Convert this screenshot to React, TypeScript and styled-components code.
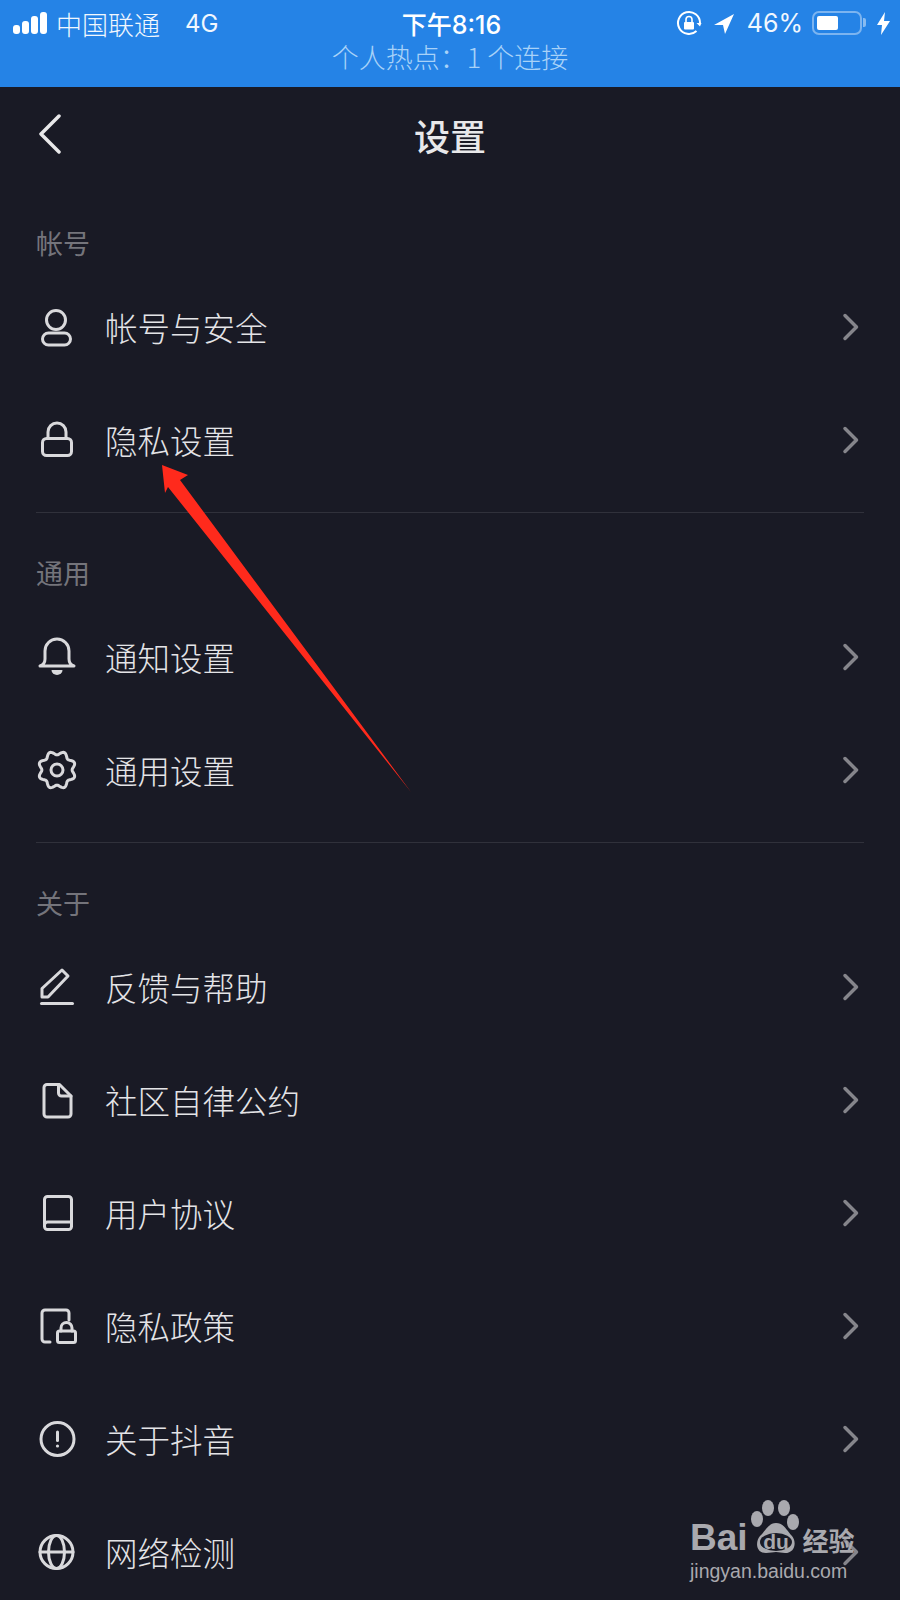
import React from "react";
import styled, { createGlobalStyle } from "styled-components";

const GlobalStyle = createGlobalStyle`
  html, body {
    margin: 0;
    padding: 0;
    background: #191a25;
  }
  * {
    box-sizing: border-box;
  }
`;

const CJK = `"Noto Sans CJK SC", "Noto Sans", sans-serif`;
const LATIN = `Inter, "Noto Sans CJK SC", sans-serif`;

// 8 lobe outline of the settings gear
function gearPath() {
  const pts: string[] = [];
  for (let i = 0; i < 96; i++) {
    const a = (i / 96) * Math.PI * 2 + Math.PI / 8;
    const r = 17 + 1.9 * Math.cos(8 * (a - Math.PI / 8));
    pts.push(`${(21 + r * Math.cos(a)).toFixed(2)} ${(21 + r * Math.sin(a)).toFixed(2)}`);
  }
  return `M${pts.join("L")}Z`;
}

const icons: Record<string, React.ReactNode> = {
  user: (
    <>
      <circle cx="20" cy="14" r="9.5" />
      <rect x="6.5" y="27" width="28" height="12" rx="6" />
    </>
  ),
  lock: (
    <>
      <rect x="6.5" y="19.5" width="29" height="17" rx="4" />
      <path d="M12 19v-6a9 9 0 0 1 18 0v6" />
    </>
  ),
  bell: (
    <>
      <path d="M4 30c3-1 5-3 5-7v-8a12 12 0 0 1 24 0v8c0 4 2 6 5 7z" />
      <path d="M15.5 34h11a5.5 5 0 0 1-11 0z" fill="#d9d9dc" stroke="none" />
    </>
  ),
  gear: (
    <>
      <path d={gearPath()} />
      <circle cx="21" cy="21" r="6" />
    </>
  ),
  pen: (
    <>
      <path d="M26 4l6 6-20 21H6v-8.5z" />
      <path d="M5.5 37.5h31" />
    </>
  ),
  doc: (
    <>
      <path d="M11 5.5h12.5L35 17v18a3 3 0 0 1-3 3H11a3 3 0 0 1-3-3V8.500a3 3 0 0 1 3-3z" />
      <path d="M22.500 5.500v8.500a3 3 0 0 0 3 3h9.500" />
    </>
  ),
  book: (
    <>
      <rect x="8.500" y="4.500" width="27" height="33" rx="3" />
      <path d="M8.500 33a3 3 0 0 1 3-3h24" />
    </>
  ),
  policy: (
    <>
      <path d="M14 37H9a3 3 0 0 1-3-3V8a3 3 0 0 1 3-3h21a3 3 0 0 1 3 3v7" />
      <rect x="21.500" y="26" width="18" height="11.500" rx="2" />
      <path d="M25 26v-3a5.500 5.500 0 0 1 11 0v3" />
    </>
  ),
  alert: (
    <>
      <circle cx="21.500" cy="21" r="16.500" />
      <path d="M21.500 14v8.500" />
      <circle cx="21.500" cy="28" r="1.600" fill="#d9d9dc" stroke="none" />
    </>
  ),
  globe: (
    <>
      <circle cx="20.500" cy="21" r="16.500" />
      <ellipse cx="20.500" cy="21" rx="8" ry="16.500" />
      <path d="M4 21h33" />
    </>
  ),
};

const sections = [
  {
    title: "帐号",
    rows: [
      { icon: "user", label: "帐号与安全" },
      { icon: "lock", label: "隐私设置" },
    ],
  },
  {
    title: "通用",
    rows: [
      { icon: "bell", label: "通知设置" },
      { icon: "gear", label: "通用设置" },
    ],
  },
  {
    title: "关于",
    rows: [
      { icon: "pen", label: "反馈与帮助" },
      { icon: "doc", label: "社区自律公约" },
      { icon: "book", label: "用户协议" },
      { icon: "policy", label: "隐私政策" },
      { icon: "alert", label: "关于抖音" },
      { icon: "globe", label: "网络检测" },
    ],
  },
];

export default function App() {
  return (
    <>
      <GlobalStyle />
      <Page>
        <StatusBar>
          <StatusRow>
            <StatusLeft>
              <svg width="35" height="22" viewBox="0 0 35 22" fill="#fff">
                <rect x="0" y="13" width="7" height="9" rx="3" />
                <rect x="9" y="9" width="7" height="13" rx="3" />
                <rect x="18" y="4" width="7" height="18" rx="3" />
                <rect x="27" y="0" width="7" height="22" rx="3" />
              </svg>
              <Carrier>中国联通</Carrier>
              <Network>4G</Network>
            </StatusLeft>
            <Clock>下午8:16</Clock>
            <StatusRight>
              <svg width="26" height="26" viewBox="0 0 26 26" fill="none" stroke="#fff" strokeWidth="2">
                <path d="M24 13a11 11 0 1 0-3.500 8" />
                <path d="M20.500 13l3.500 3.500 1.500-3.500z" fill="#fff" stroke="none" />
                <rect x="8" y="12" width="10" height="7.500" rx="1" fill="#fff" stroke="none" />
                <path d="M10 12V9.500a3 3 0 0 1 6 0V12" strokeWidth="1.600" />
              </svg>
              <svg width="21" height="21" viewBox="0 0 21 21" fill="#fff">
                <path d="M0 12L20 1 11 21 9 12z" />
              </svg>
              <Percent>46%</Percent>
              <Battery>
                <BatteryFill />
              </Battery>
              <svg width="13" height="23" viewBox="0 0 13 23" fill="#fff">
                <path d="M8 0L0 13h5l-1 10 9-14H7z" />
              </svg>
            </StatusRight>
          </StatusRow>
          <Hotspot>个人热点：1 个连接</Hotspot>
        </StatusBar>

        <NavBar>
          <BackButton>
            <svg width="24" height="40" viewBox="0 0 24 40" fill="none" stroke="#e8e8ea" strokeWidth="3.500" strokeLinecap="round" strokeLinejoin="round">
              <path d="M21 2L3 20l18 18" />
            </svg>
          </BackButton>
          <Title>设置</Title>
        </NavBar>

        {sections.map((section, index) => (
          <Section key={section.title} $last={index === sections.length - 1}>
            <SectionTitle>{section.title}</SectionTitle>
            {section.rows.map((row) => (
              <Row key={row.label}>
                <RowIcon viewBox="0 0 42 42">{icons[row.icon]}</RowIcon>
                <RowLabel>{row.label}</RowLabel>
                <Chevron viewBox="0 0 18 28">
                  <path d="M3 2.500l11.500 11.500L3 25.500" />
                </Chevron>
              </Row>
            ))}
          </Section>
        ))}

        <Arrow width="900" height="1600" viewBox="0 0 900 1600">
          <path d="M162 465L188 475 180 480 411 792 168 487 165 493z" fill="#ff2a1c" />
        </Arrow>

        <Watermark>
          <WatermarkTop>
            <BaiText>Bai</BaiText>
            <svg width="54" height="62" viewBox="0 0 54 62">
              <g fill="#a9a9ae">
                <ellipse cx="19" cy="11" rx="6" ry="8" />
                <ellipse cx="35" cy="11" rx="6" ry="8" />
                <ellipse cx="8" cy="22" rx="6" ry="8" />
                <ellipse cx="44" cy="25" rx="6" ry="8" />
                <path d="M27 26c8 0 11 8 16 13 5 6 3 17-7 17-3 0-6-1-9-1s-6 1-10 1C7 56 6 45 11 39c5-4 8-13 16-13z" />
              </g>
              <ellipse cx="27" cy="45" rx="16" ry="9" fill="#191a25" />
              <text x="27" y="52" textAnchor="middle" fontFamily="Liberation Sans, sans-serif" fontSize="21" fontWeight="700" fill="#a9a9ae">
                du
              </text>
            </svg>
            <JingyanText>经验</JingyanText>
          </WatermarkTop>
          <SiteText>jingyan.baidu.com</SiteText>
        </Watermark>
      </Page>
    </>
  );
}

const Page = styled.div`
  position: relative;
  width: 900px;
  height: 1600px;
  overflow: hidden;
  background: #191a25;
  font-family: ${CJK};
`;

const StatusBar = styled.header`
  display: flex;
  flex-direction: column;
  height: 87px;
  background: #2583e6;
  color: #fff;
`;

const StatusRow = styled.div`
  display: grid;
  grid-template-columns: 1fr auto 1fr;
  align-items: center;
  height: 46px;
  padding: 0 10px 0 13px;
`;

const StatusLeft = styled.div`
  display: flex;
  align-items: center;
  gap: 8px;
`;

const Carrier = styled.span`
  font-size: 26px;
  font-weight: 300;
  color: #f1f7fe;
`;

const Network = styled.span`
  margin-left: 17px;
  font-family: ${LATIN};
  font-size: 24px;
  font-weight: 400;
  color: #f1f7fe;
`;

const Clock = styled.span`
  font-family: ${LATIN};
  font-size: 25px;
  font-weight: 500;
  color: #fff;
`;

const StatusRight = styled.div`
  display: flex;
  align-items: center;
  justify-content: flex-end;
  gap: 12px;
`;

const Percent = styled.span`
  font-family: ${LATIN};
  font-size: 25px;
  font-weight: 400;
  color: #f1f7fe;
`;

const Battery = styled.div`
  position: relative;
  width: 50px;
  height: 24px;
  margin: 0 3px 0 -3px;
  padding: 3px;
  border: 2px solid rgba(255, 255, 255, 0.4);
  border-radius: 7px;

  &::after {
    content: "";
    position: absolute;
    top: 5px;
    right: -6px;
    width: 3px;
    height: 9px;
    border-radius: 0 2px 2px 0;
    background: rgba(255, 255, 255, 0.45);
  }
`;

const BatteryFill = styled.div`
  width: 21px;
  height: 100%;
  border-radius: 2px;
  background: #fff;
`;

const Hotspot = styled.div`
  margin-top: -6px;
  text-align: center;
  font-size: 27px;
  font-weight: 300;
  line-height: 34px;
  color: #a8d2f8;
`;

const NavBar = styled.nav`
  position: relative;
  display: flex;
  align-items: center;
  justify-content: center;
  height: 96px;
`;

const BackButton = styled.div`
  position: absolute;
  top: 27px;
  left: 38px;
  display: flex;
`;

const Title = styled.h1`
  margin: 0;
  font-size: 36px;
  font-weight: 500;
  color: #e8e8ea;
`;

const Section = styled.section<{ $last: boolean }>`
  margin: 0 36px;
  padding-bottom: ${(p) => (p.$last ? 0 : "16px")};
  border-bottom: ${(p) => (p.$last ? "none" : "1px solid #30313b")};
`;

const SectionTitle = styled.h2`
  margin: 0;
  padding: 45px 0 12px;
  font-size: 27px;
  font-weight: 400;
  line-height: 30px;
  color: #74747b;
`;

const Row = styled.div`
  display: flex;
  align-items: center;
  height: 113px;
`;

const RowIcon = styled.svg`
  flex: none;
  width: 42px;
  height: 42px;
  margin-right: 27px;
  fill: none;
  stroke: #d9d9dc;
  stroke-width: 3;
  stroke-linecap: round;
  stroke-linejoin: round;
`;

const RowLabel = styled.span`
  flex: 1;
  font-size: 32.500px;
  font-weight: 300;
  color: #e4e4e7;
`;

const Chevron = styled.svg`
  flex: none;
  width: 18px;
  height: 28px;
  margin-right: 4px;
  fill: none;
  stroke: #85858b;
  stroke-width: 3.500;
  stroke-linecap: round;
  stroke-linejoin: round;
`;

const Arrow = styled.svg`
  position: absolute;
  top: 0;
  left: 0;
  pointer-events: none;
`;

const Watermark = styled.div`
  position: absolute;
  top: 1503px;
  left: 690px;
  display: flex;
  flex-direction: column;
  color: #a9a9ae;
`;

const WatermarkTop = styled.div`
  display: flex;
  align-items: flex-end;
  height: 56px;
`;

const BaiText = styled.span`
  margin-right: 1px;
  font-family: "Liberation Sans", sans-serif;
  font-size: 37px;
  font-weight: 700;
  line-height: 42px;
`;

const JingyanText = styled.span`
  margin-bottom: 2px;
  font-size: 26px;
  font-weight: 700;
  line-height: 34px;
`;

const SiteText = styled.span`
  font-family: "Liberation Sans", sans-serif;
  font-size: 19.500px;
  line-height: 24px;
  margin-top: 0;
`;
